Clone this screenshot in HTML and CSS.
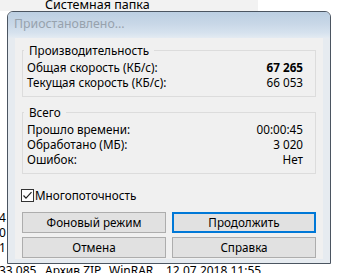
FILE: index.html
```html
<!DOCTYPE html>
<html lang="ru">
<head>
<meta charset="utf-8">
<title>Приостановлено</title>
<link rel="stylesheet" href="styles.css">
</head>
<body>
<div class="desk">
  <div class="band"><span class="band-text">Системная папка</span></div>
  <div class="peek">
    <div>4</div>
    <div>0</div>
    <div>1</div>
  </div>
  <div class="lastrow">
    <span>33 085</span><span>Архив ZIP</span><span>WinRAR</span><span>12.07.2018 11:55</span>
  </div>
</div>

<div class="win">
  <div class="caption">Приостановлено...</div>
  <div class="frame">
    <div class="client">
      <fieldset class="group">
        <legend>Производительность</legend>
        <div class="row"><span>Общая скорость (КБ/с):</span><b>67 265</b></div>
        <div class="row"><span>Текущая скорость (КБ/с):</span><span>66 053</span></div>
      </fieldset>
      <fieldset class="group group-total">
        <legend>Всего</legend>
        <div class="row"><span>Прошло времени:</span><span>00:00:45</span></div>
        <div class="row"><span>Обработано (МБ):</span><span>3 020</span></div>
        <div class="row"><span>Ошибок:</span><span>Нет</span></div>
      </fieldset>
      <div class="check">
        <svg class="box" width="13" height="13" viewBox="0 0 13 13">
          <rect x="0.5" y="0.5" width="12" height="12" fill="#fff" stroke="#333"/>
          <polyline points="2.5,6.5 5,9.2 10.5,3.2" fill="none" stroke="#222" stroke-width="1.2"/>
        </svg>
        <span>Многопоточность</span>
      </div>
      <div class="buttons">
        <div class="btn">Фоновый режим</div>
        <div class="btn btn-default">Продолжить</div>
        <div class="btn">Отмена</div>
        <div class="btn">Справка</div>
      </div>
    </div>
  </div>
</div>
</body>
</html>
```

FILE: styles.css
```css
html, body {
  margin: 0;
  padding: 0;
  width: 338px;
  height: 273px;
  overflow: hidden;
  background: #fff;
}

body {
  position: relative;
  font-family: "Noto Sans", "Open Sans", sans-serif;
  font-size: 11.7px;
  color: #000;
}

.desk {
  display: flex;
  flex-direction: column;
  font-size: 12px;
}

.band {
  width: 258px;
  height: 11px;
  background: #f2f2f2;
  padding-left: 45px;
  box-sizing: border-box;
  line-height: 10px;
  white-space: nowrap;
  font-size: 12.5px;
}

.peek {
  margin-top: 199px;
  line-height: 15px;
}

.peek div {
  margin-left: -1px;
  height: 15px;
}

.lastrow {
  margin-top: 8px;
  display: grid;
  grid-template-columns: 46px 64px 57px auto;
  line-height: 15px;
  white-space: nowrap;
  margin-left: -1px;
}

.win {
  position: absolute;
  left: 7px;
  top: 11px;
  width: 324px;
  box-sizing: border-box;
  border: 1px solid #4b5561;
  border-radius: 6px 6px 0 0;
  background: #e6ebf0;
  overflow: hidden;
}

.caption {
  height: 26px;
  box-sizing: border-box;
  line-height: 24px;
  padding: 0 0 2px 6px;
  color: #97a2ad;
  font-size: 12.3px;
  background: linear-gradient(#bccfe2 0%, #c8d7e7 45%, #d6e2ee 80%, #e4ebf2 100%);
}

.frame {
  padding: 0 7px 4px 7px;
}

.client {
  background: #f0f0f0;
  padding: 5px 7px 1px 7px;
  display: flex;
  flex-direction: column;
}

.group {
  margin: 0;
  padding: 3px 12px 6px 4px;
  border: 1px solid #dcdcdc;
  min-inline-size: 0;
}

.group legend {
  padding: 0 5px;
  margin-left: -3px;
  line-height: 14px;
  height: 14px;
}

.group-total {
  margin-top: 8px;
}

.row {
  display: flex;
  justify-content: space-between;
  height: 15px;
  line-height: 15px;
  white-space: nowrap;
}

.row b {
  font-weight: 700;
}

.check {
  margin-top: 14px;
  margin-left: -1px;
  height: 15px;
  line-height: 15px;
  display: flex;
  align-items: center;
  gap: 1px;
}

.check .box {
  display: block;
}

.buttons {
  margin-top: 9px;
  display: grid;
  grid-template-columns: 1fr 1fr;
  column-gap: 6px;
  row-gap: 4px;
}

.btn {
  height: 21px;
  box-sizing: border-box;
  background: #e1e1e1;
  border: 1px solid #adadad;
  text-align: center;
  line-height: 19px;
  white-space: nowrap;
}

.btn-default {
  border: 2px solid #0078d7;
  line-height: 17px;
}
```
